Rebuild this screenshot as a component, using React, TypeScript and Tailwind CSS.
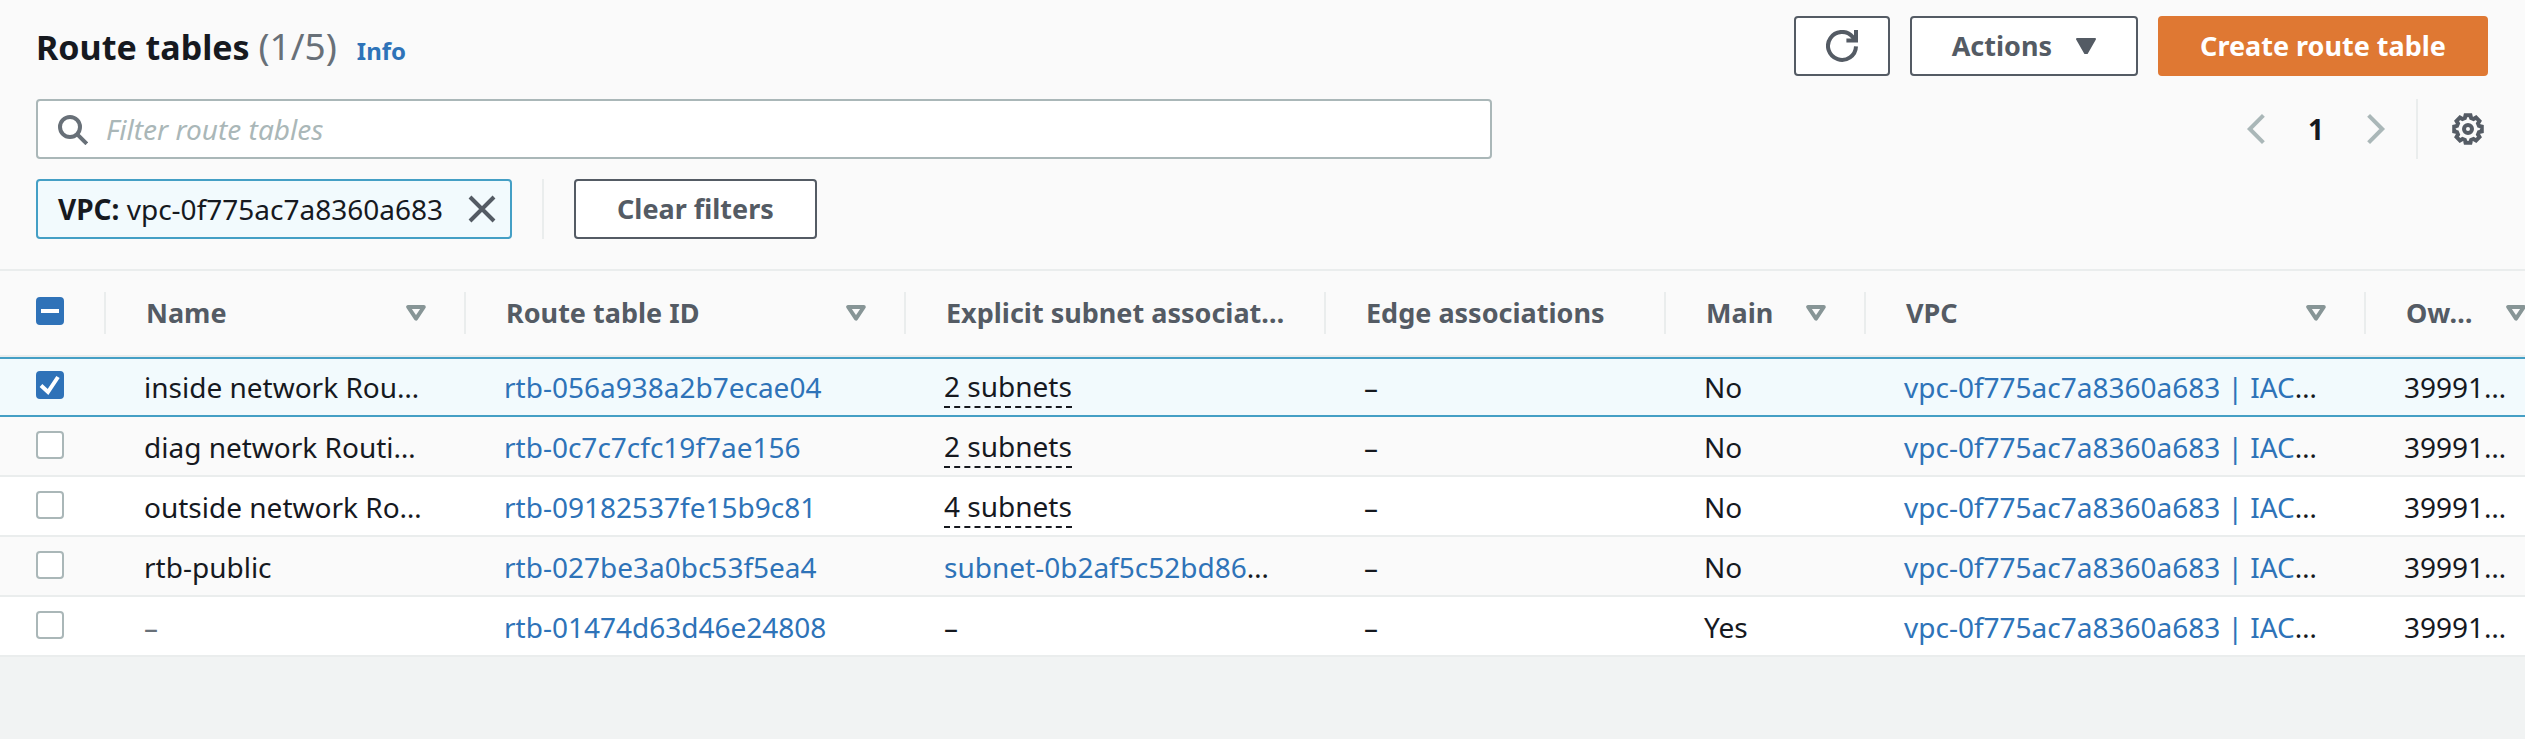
import { useState, type ReactNode } from "react";

type Column = { label: string; width: string; sortable: boolean };

const columns: Column[] = [
  { label: "Name", width: "w-[360px]", sortable: true },
  { label: "Route table ID", width: "w-[440px]", sortable: true },
  { label: "Explicit subnet associat…", width: "w-[420px]", sortable: false },
  { label: "Edge associations", width: "w-[340px]", sortable: false },
  { label: "Main", width: "w-[200px]", sortable: true },
  { label: "VPC", width: "w-[500px]", sortable: true },
  { label: "Ow…", width: "w-[200px]", sortable: true },
];

type Row = { name: string; id: string; subnets: string; main: string };

const rows: Row[] = [
  { name: "inside network Rou…", id: "rtb-056a938a2b7ecae04", subnets: "2 subnets", main: "No" },
  { name: "diag network Routi…", id: "rtb-0c7c7cfc19f7ae156", subnets: "2 subnets", main: "No" },
  { name: "outside network Ro…", id: "rtb-09182537fe15b9c81", subnets: "4 subnets", main: "No" },
  { name: "rtb-public", id: "rtb-027be3a0bc53f5ea4", subnets: "subnet-0b2af5c52bd86", main: "No" },
  { name: "–", id: "rtb-01474d63d46e24808", subnets: "–", main: "Yes" },
];

function Icon({ children, className = "" }: { children: ReactNode; className?: string }) {
  return (
    <svg viewBox="0 0 16 16" fill="none" stroke="currentColor" strokeWidth="2" className={`size-8 shrink-0 ${className}`} aria-hidden="true">
      {children}
    </svg>
  );
}

const gearPoints = Array.from({ length: 8 }, (_, i) =>
  [
    [-16, 5.7],
    [-10, 7],
    [10, 7],
    [16, 5.7],
  ].map(([deg, r]) => {
    const a = ((i * 45 + deg) * Math.PI) / 180;
    return `${(8 + r * Math.sin(a)).toFixed(2)},${(8 - r * Math.cos(a)).toFixed(2)}`;
  }),
)
  .flat()
  .join(" ");

function SortCaret() {
  return (
    <svg viewBox="0 0 20 16" className="h-4 w-5 shrink-0 text-[#879596]" fill="none" stroke="currentColor" strokeWidth="4" strokeLinejoin="round" aria-hidden="true">
      <path d="M2.2 2h15.6L10 13.6z" />
    </svg>
  );
}

function Checkbox({ label, checked, mixed = false, onChange }: { label: string; checked: boolean; mixed?: boolean; onChange: () => void }) {
  const on = checked || mixed;
  return (
    <label className="grid size-7">
      <input
        type="checkbox"
        aria-label={label}
        checked={checked}
        onChange={onChange}
        ref={(el) => {
          if (el) el.indeterminate = mixed;
        }}
        className={`col-start-1 row-start-1 size-7 appearance-none rounded-[4px] border-2 ${on ? "border-[#2f72b8] bg-[#2f72b8]" : "border-[#aab7b8] bg-white"}`}
      />
      {on && (
        <svg viewBox="0 0 28 28" className="pointer-events-none col-start-1 row-start-1 size-7" fill="none" stroke="#fff" strokeWidth="4" aria-hidden="true">
          {mixed ? <path d="M5 14h18" /> : <path d="M5 14.5l7 6.500L22 6" />}
        </svg>
      )}
    </label>
  );
}

const button = "flex h-[60px] items-center justify-center rounded-[4px] border-2 text-[27px] font-bold";
const plain = "border-[#545b64] bg-white text-[#545b64]";
const cell = "h-[60px] border-y-2 whitespace-nowrap";
const link = "text-[#2e73b8]";

export default function App() {
  const [selected, setSelected] = useState<string[]>([rows[0].id]);
  const toggle = (id: string) => setSelected((s) => (s.includes(id) ? s.filter((x) => x !== id) : [...s, id]));
  const all = selected.length === rows.length;

  return (
    <main className="min-h-screen bg-[#f1f3f3] font-['Noto_Sans',sans-serif] text-[28px] leading-10 text-[#16191f]">
      <section className="bg-[#fafafa]">
        <header className="pt-4 pr-[37px] pb-[30px] pl-9">
          <div className="flex items-center justify-between">
            <div className="flex items-baseline pt-1">
              <h1 className="text-[34px] font-bold">
                Route tables <span className="text-[37px] font-normal text-[#687078]">({selected.length}/{rows.length})</span>
              </h1>
              <a href="#info" className="ml-5 text-[24px] font-bold text-[#2e73b8]">Info</a>
            </div>
            <div className="flex gap-5">
              <button type="button" aria-label="Refresh" className={`${button} ${plain} w-24`}>
                <Icon>
                  <path d="M15 8.2A7 7 0 1 1 13.4 3.5L14.8 5M10.2 5.2H15V0" />
                </Icon>
              </button>
              <button type="button" className={`${button} ${plain} gap-6 px-10`}>
                Actions
                <svg viewBox="0 0 20 16" className="h-4 w-5" fill="currentColor" stroke="currentColor" strokeWidth="2" strokeLinejoin="round" aria-hidden="true">
                  <path d="M1 1h18L11 15H9z" />
                </svg>
              </button>
              <button type="button" className={`${button} border-[#df7833] bg-[#df7833] px-10 text-white`}>
                Create route table
              </button>
            </div>
          </div>

          <div className="mt-[23px] flex items-center justify-between">
            <label className="flex h-[60px] max-w-[1456px] flex-1 items-center gap-[18px] rounded-[4px] border-2 border-[#aab7b8] bg-white px-[18px]">
              <Icon className="text-[#687078]">
                <circle cx="7" cy="7" r="5" />
                <path d="M10.4 10.4l5 5" />
              </Icon>
              <input type="search" aria-label="Filter route tables" placeholder="Filter route tables" className="min-w-0 flex-1 bg-transparent outline-none placeholder:text-[#aab7b8] placeholder:italic" />
            </label>
            <div className="flex h-[60px] items-center">
              <button type="button" aria-label="Previous page" className="text-[#aab7b8]">
                <Icon>
                  <path d="M11.7 1.2L4.9 8l6.8 6.8" />
                </Icon>
              </button>
              <button type="button" aria-label="Page 1" className="w-[88px] text-center font-bold">1</button>
              <button type="button" aria-label="Next page" className="text-[#aab7b8]">
                <Icon>
                  <path d="M4.3 1.2L11.1 8l-6.8 6.8" />
                </Icon>
              </button>
              <div className="ml-6 h-full w-0.5 bg-[#eaeded]" />
              <button type="button" aria-label="Preferences" className="mr-1 ml-[34px] text-[#545b64]">
                <Icon>
                  <polygon points={gearPoints} />
                  <circle cx="8" cy="8" r="2" />
                </Icon>
              </button>
            </div>
          </div>

          <div className="mt-5 flex items-center">
            <div className="flex h-[60px] items-center rounded-[4px] border-2 border-[#449fc5] bg-[#f2fafd] pr-3 pl-5">
              <span><b>VPC:</b> vpc-0f775ac7a8360a683</span>
              <button type="button" aria-label="Remove filter" className="ml-[23px] text-[#545b64]">
                <Icon>
                  <path d="M2 2l12 12M14 2L2 14" />
                </Icon>
              </button>
            </div>
            <div className="mx-[30px] h-[60px] w-0.5 bg-[#eaeded]" />
            <button type="button" className={`${button} ${plain} px-[41px]`}>Clear filters</button>
          </div>
        </header>

        <div className="overflow-hidden">
          <table className="w-full min-w-[2566px] table-fixed border-separate border-spacing-0 text-left">
            <thead>
              <tr>
                <th className="h-[88px] w-[106px] border-y-2 border-[#eaeded] p-0">
                  <div className="flex h-[42px] items-center border-r-2 border-[#eaeded] pb-1 pl-9">
                    <Checkbox label="Select all" checked={all} mixed={selected.length > 0 && !all} onChange={() => setSelected(all ? [] : rows.map((r) => r.id))} />
                  </div>
                </th>
                {columns.map((c) => (
                  <th key={c.label} className={`border-y-2 border-[#eaeded] p-0 ${c.width}`}>
                    <div className="flex h-[42px] items-center justify-between border-r-2 border-[#eaeded] pr-[38px] pl-10 text-[27px] font-bold whitespace-nowrap text-[#545b64]">
                      {c.label}
                      {c.sortable && (
                        <button type="button" aria-label={`Sort by ${c.label}`}>
                          <SortCaret />
                        </button>
                      )}
                    </div>
                  </th>
                ))}
              </tr>
            </thead>
            <tbody>
              {rows.map((r, i) => {
                const isOn = selected.includes(r.id);
                const tone = isOn
                  ? "border-[#449fc5] bg-[#f2fafd]"
                  : `border-t-transparent border-b-[#eaeded] ${i % 2 ? "bg-[#fafafa]" : "bg-white"}`;
                const td = `${cell} ${tone} pl-[38px]`;
                return (
                  <tr key={r.id}>
                    <td className={`${cell} ${tone} pb-1 pl-9`}>
                      <Checkbox label={`Select ${r.id}`} checked={isOn} onChange={() => toggle(r.id)} />
                    </td>
                    <td className={`${td} ${r.name === "–" ? "text-[#687078]" : ""}`}>{r.name}</td>
                    <td className={td}><a href={`#${r.id}`} className={link}>{r.id}</a></td>
                    <td className={td}>
                      {r.subnets.endsWith("subnets") ? (
                        <button type="button" className="block border-b-2 border-dashed border-[#16191f]">{r.subnets}</button>
                      ) : r.subnets === "–" ? (
                        "–"
                      ) : (
                        <><a href="#subnet" className={link}>{r.subnets}</a>…</>
                      )}
                    </td>
                    <td className={td}>–</td>
                    <td className={td}>{r.main}</td>
                    <td className={td}><a href="#vpc" className={link}>vpc-0f775ac7a8360a683 | IAC</a>…</td>
                    <td className={td}>39991…</td>
                  </tr>
                );
              })}
            </tbody>
          </table>
        </div>
      </section>
    </main>
  );
}
